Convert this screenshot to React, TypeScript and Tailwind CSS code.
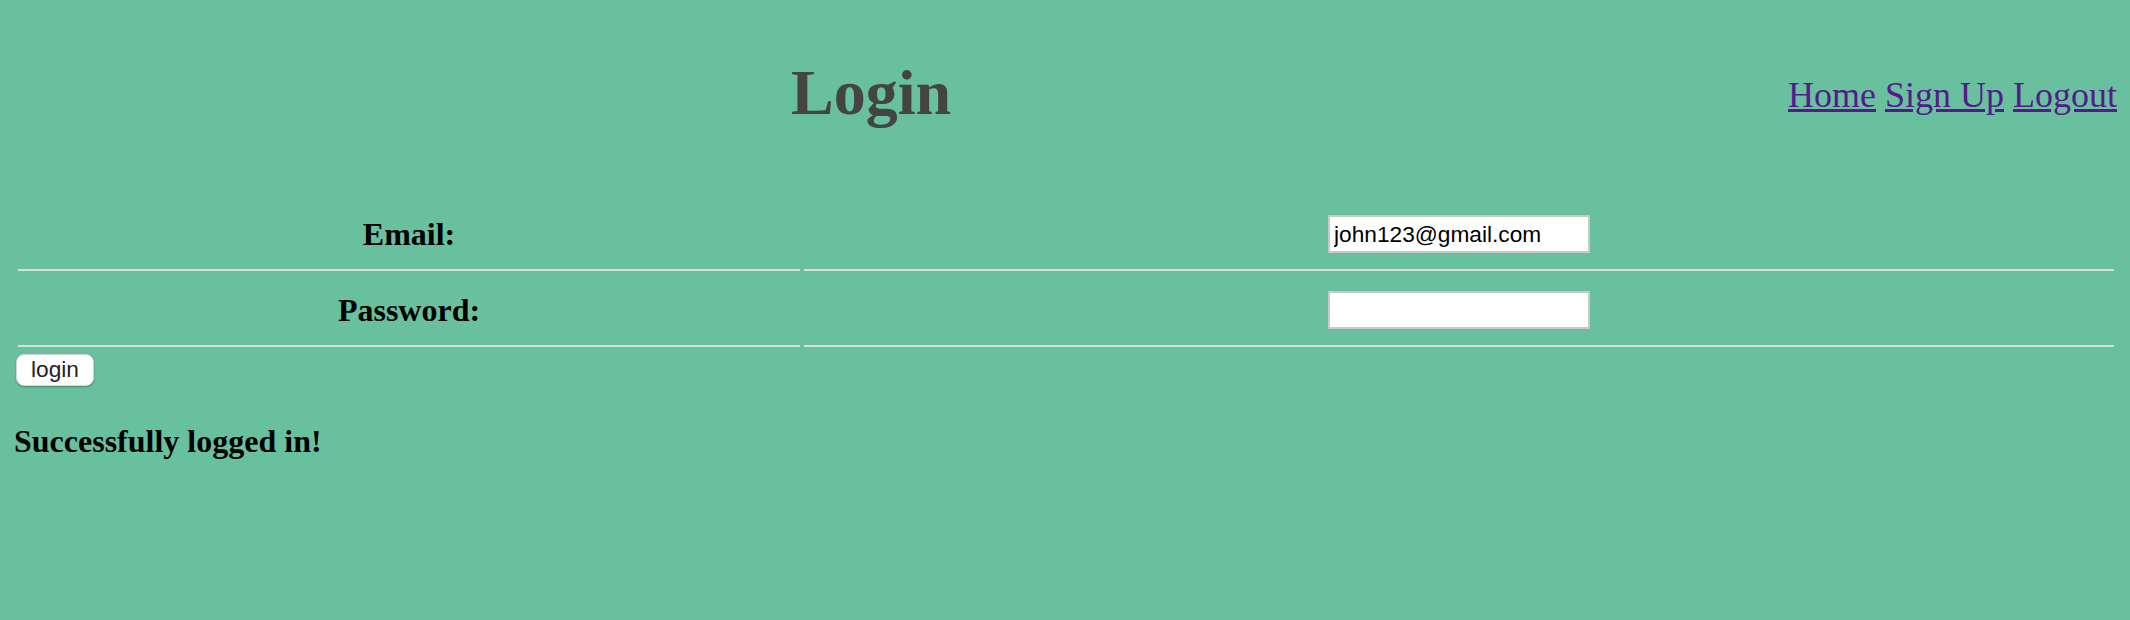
import React from "react";

const serif = { fontFamily: '"Liberation Serif", "Times New Roman", serif' };
const sans = { fontFamily: '"Liberation Sans", Arial, sans-serif' };

function Row({ label, children }: { label: string; children: React.ReactNode }) {
  return (
    <div className="flex gap-[4px]">
      <div className="w-[782px] shrink-0 flex items-center justify-center py-[16px] border-b-2 border-[#dcdcdc]">
        <span className="text-[32px] font-bold text-black leading-[38px]" style={serif}>
          {label}
        </span>
      </div>
      <div className="flex-1 flex items-center justify-center py-[16px] border-b-2 border-[#dcdcdc]">
        {children}
      </div>
    </div>
  );
}

export default function App() {
  return (
    <div className="min-h-screen w-full bg-[#69c09f] text-black" style={serif}>
      <div className="flex items-start">
        <h1
          className="ml-[791px] mt-[53px] text-[64px] leading-[80px] font-bold text-[#444444]"
          style={serif}
        >
          Login
        </h1>
        <nav className="ml-auto mr-[13px] mt-[71px] text-[36px] leading-[48px] text-[#551a8b]" style={serif}>
          <a href="#" className="underline">Home</a>{" "}
          <a href="#" className="underline">Sign Up</a>{" "}
          <a href="#" className="underline">Logout</a>
        </nav>
      </div>

      <div className="mt-[66px] ml-[18px] mr-[16px] flex flex-col gap-[4px]">
        <Row label="Email:">
          <input
            type="text"
            defaultValue="john123@gmail.com"
            className="w-[262px] h-[38px] bg-white border-2 border-[#c9c9c9] px-[4px] text-[22.7px] text-black outline-none"
            style={sans}
          />
        </Row>
        <Row label="Password:">
          <input
            type="password"
            className="w-[262px] h-[38px] bg-white border-2 border-[#c9c9c9] px-[4px] text-[22.7px] text-black outline-none"
            style={sans}
          />
        </Row>
      </div>

      <div className="ml-[16px] mt-[7px]">
        <button
          className="w-[78px] h-[32px] bg-white rounded-[8px] border border-[#d4d4d4] shadow-[0_1px_2px_rgba(0,0,0,0.3)] text-[22.7px] leading-none text-[#222] flex items-center justify-center pb-[2px]"
          style={sans}
        >
          login
        </button>
      </div>

      <div className="ml-[14px] mt-[35px] text-[32px] leading-[40px] font-bold text-black" style={serif}>
        Successfully logged in!
      </div>
    </div>
  );
}
